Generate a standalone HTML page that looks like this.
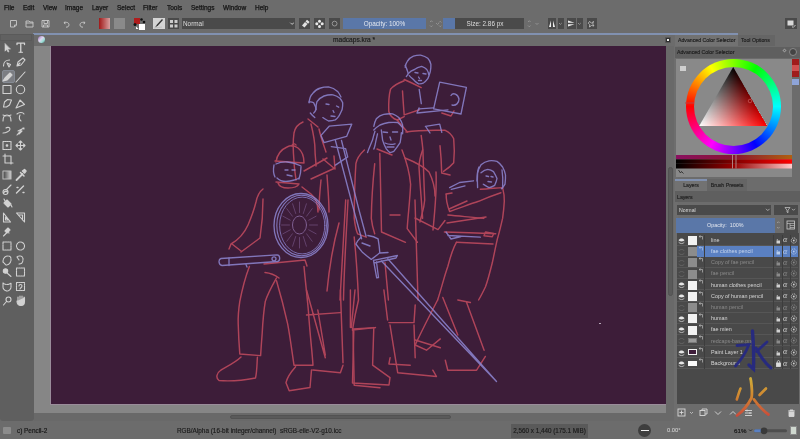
<!DOCTYPE html>
<html><head><meta charset="utf-8">
<style>
*{margin:0;padding:0;box-sizing:border-box}
html,body{width:800px;height:439px;overflow:hidden;background:#6c6c6c;font-family:"Liberation Sans",sans-serif;color:#1e1e1e}
.a{position:absolute}
body>div,body>svg{will-change:transform}
.menu{font-size:6.5px;top:4.2px;color:#151515;-webkit-text-stroke:0.25px #151515}
.tb{position:absolute;top:18px;height:11px}
</style></head><body>
<!-- menu -->
<div class="a menu" style="left:4px">File</div>
<div class="a menu" style="left:23px">Edit</div>
<div class="a menu" style="left:42.5px">View</div>
<div class="a menu" style="left:65px">Image</div>
<div class="a menu" style="left:92px">Layer</div>
<div class="a menu" style="left:117px">Select</div>
<div class="a menu" style="left:143px">Filter</div>
<div class="a menu" style="left:167px">Tools</div>
<div class="a menu" style="left:190.5px">Settings</div>
<div class="a menu" style="left:222.5px">Window</div>
<div class="a menu" style="left:255px">Help</div>

<!-- toolbar -->
<div class="tb" style="left:99px;width:11px;background:linear-gradient(90deg,#a01818,#d8a0a0)"></div>
<div class="tb" style="left:114px;width:11px;background:#8a8a8a"></div>
<div class="tb" style="left:133.5px;width:5.5px;height:5.5px;background:#b01c1c"></div>
<div class="tb" style="left:139px;top:23.5px;width:6px;height:5.5px;background:#fff"></div>
<div class="tb" style="left:152.5px;width:11.5px;background:#d4d4d4"></div>
<div class="tb" style="left:168px;width:11px;background:#4a4a4a"></div>
<div class="tb" style="left:182px;width:113px;background:#4a4a4a;color:#ddd;font-size:6.4px;line-height:11px;padding-left:1px">Normal</div>
<div class="tb" style="left:299px;width:11px;background:#4a4a4a"></div>
<div class="tb" style="left:314px;width:11px;background:#4a4a4a"></div>
<div class="tb" style="left:329px;width:11px;background:#4a4a4a"></div>
<div class="tb" style="left:343px;width:83px;background:#5a77a8;color:#e4e8f0;font-size:6.4px;line-height:11px;text-align:center">Opacity: 100%</div>
<div class="tb" style="left:443px;width:81px;background:#4a4a4a;color:#ddd;font-size:6.4px;line-height:11px;text-align:center"><div class="a" style="left:0;top:0;width:12px;height:11px;background:#5a77a8"></div><span style="position:relative;left:1.5px">Size: 2.86 px</span></div>
<div class="tb" style="left:548px;width:8px;background:#4a4a4a"></div>
<div class="tb" style="left:558px;width:5.5px;background:#4a4a4a"></div>
<div class="tb" style="left:567px;width:8.5px;background:#4a4a4a"></div>
<div class="tb" style="left:577px;width:5.5px;background:#4a4a4a"></div>
<div class="tb" style="left:587px;width:10px;background:#4a4a4a"></div>
<div class="tb" style="left:785px;width:11.5px;background:#4a4a4a"></div>

<!-- blue line -->
<div class="a" style="left:33px;top:33px;width:705px;height:2px;background:#8191b0"></div>

<!-- toolbox -->
<div class="a" style="left:0;top:34px;width:33.7px;height:386.5px;background:#5f5f5f;border-radius:0 0 3px 3px"></div><div class="a" style="left:0;top:34px;width:31.8px;height:7px;border:1px solid #5a5a5a;background:#616161"></div>


<!-- toolbar icons -->
<svg class="a" style="left:0;top:0" width="100" height="34" fill="none" stroke="#c9c9c9" stroke-width="0.9">
<path d="M10.5 20.5h6v4.5l-2 2h-4z M14.5 27v-2h2"/>
<path d="M26 21h3l1 1h3v5h-7z M26 23h7"/>
<path d="M42 20.5h7v6.5h-7z M44 20.5v3h3.5v-3 M43.5 27v-2h4v2"/>
<path d="M65 21.5l-1 1.5 1.5 0.8 M64.2 23c1.5-1.2 4.8-0.8 4.8 1.8 0 2-1.6 2.5-3 2.3"/>
<path d="M84 21.5l1 1.5-1.5 0.8 M84.8 23c-1.5-1.2-4.8-0.8-4.8 1.8 0 2 1.6 2.5 3 2.3"/>
</svg>
<!-- toolbox icons -->
<div class="a" style="left:1.5px;top:70px;width:12.5px;height:13px;background:#7b7d82;border-radius:2px;border:1px solid #858a93"></div>
<svg class="a" style="left:0;top:0" width="34" height="310" fill="none" stroke="#d2d2d2" stroke-width="1.1" stroke-linecap="round" stroke-linejoin="round">
<path d="M5 43.8v7.4l1.7-1.7 1.3 2.6 1-.5-1.3-2.5h2.5z" fill="#d2d2d2" stroke-width="0.6"/>
<path d="M17 43.2h7.5 M17 43.2v1.4 M24.5 43.2v1.4 M20.75 43.2v9" stroke-width="1.3"/><path d="M19 52.3h3.5"/>
<path d="M3.5 66c0-4 3-6 6-6 M7 63l3.5 1.5-1.5 2.5z" />
<path d="M17 66l1-4 5-4 2 2-4 5z M17 66l3-3"/>
<path d="M3 81l2-3 5-5 2 2-5 5z" fill="#d2d2d2"/>
<path d="M16 82l9-10"/>
<rect x="3" y="85.5" width="8" height="8"/>
<circle cx="20.5" cy="89.5" r="4.2"/>
<path d="M3.5 107l1-5 3-2.5 4 0.5-2 5-3 2z"/>
<path d="M16 108l4-8 4.5 4.5z"/>
<path d="M3 121c0-4 2-6 4-6s4 2 4 6 M3 115l3 1 M11 115l-3 1"/>
<path d="M17 114c2-2 6-2 7 0 M20 115c-1 2-1 5 1 6"/>
<path d="M3 133c3 0 7-2 7-4s-3-2-4-1"/>
<path d="M17 135l5-6 M18 131l4-2 2-1 M19 134l3-3 M23 128l1 1"/>
<rect x="3" y="141.5" width="8" height="8" stroke-dasharray="1.2 0.8"/>
<circle cx="7" cy="145.5" r="0.8" fill="#d2d2d2"/>
<path d="M20.5 141v9 M16 145.5h9 M19 142.5l1.5-1.5 1.5 1.5 M19 148.5l1.5 1.5 1.5-1.5 M17.5 144l-1.5 1.5 1.5 1.5 M23.5 144l1.5 1.5-1.5 1.5"/>
<path d="M5 154v9h8 M3 156h8v8"/>
<rect x="3" y="171" width="8" height="8" fill="url(#gr)" stroke="#bbb"/>
<path d="M16.5 180l6-6" stroke-width="1.8"/><path d="M20.5 172.5l3.5 3.5 M22.5 171l2-1.5 1.5 1.5-1.5 2z" stroke-width="1.5" fill="#d2d2d2"/>
<path d="M3.5 193c1-2 3-2 4-1 M6 190l5-5" />
<circle cx="5.5" cy="192" r="2.5"/>
<path d="M16.5 193l7-7 M17 187.5h1 M23 192.5h1" stroke-width="1.4"/>
<path d="M4 203l3-3 4 4-3 3z M5 201l-1-2 M11 205l1 2" fill="#d2d2d2"/>
<path d="M3.5 222v-9l7 9z M5.5 220v-3l3 3z"/>
<path d="M24.5 222v-9l-8 0z M22.5 220v-5h-4"/>
<path d="M3.5 236l3-3 M6 230l3 3 M5 231l3-3 2 2-3 3z" fill="#d2d2d2"/>
<g stroke-dasharray="1.4 0.9">
<rect x="3" y="242" width="8" height="8"/>
<circle cx="20.5" cy="246" r="4"/>
<path d="M3 262c0-4 2-6 5-6s3 2 3 4-2 5-5 5z"/>
<path d="M17 257c2-2 6-1 6 2s-1 5-4 5 M17 257l2 3"/>

<rect x="16.5" y="268" width="8" height="8"/>
<path d="M3 283v4c0 2 2 4 4 4s4-2 4-4v-4c-2 2-6 2-8 0z"/>
<rect x="16.5" y="282.5" width="8" height="8"/>
</g>
<circle cx="5.5" cy="271" r="2.2" fill="#d2d2d2"/><path d="M6.5 272.5l4.5 4" />
<path d="M19 286c0-2 3-2 3 0s-2 2-2 3" />
<circle cx="8.5" cy="299.5" r="2.5"/>
<path d="M3.5 305l3-3.5"/>
<path d="M17 301c0 3 2 4.5 4 4.5s3.5-1.5 3.5-4v-4 M18 301v-4 M20 300v-4 M22 300v-4 M24 300v-3" fill="#d2d2d2"/>
<defs><linearGradient id="gr"><stop offset="0" stop-color="#404040"/><stop offset="1" stop-color="#d0d0d0"/></linearGradient></defs>
</svg>


<!-- toolbar button icons -->
<svg class="a" style="left:0;top:0" width="800" height="34">
<g fill="#e8e8e8">
<path d="M302 25.5l3-3.5 2.5 2-3 3.5z M305.5 21.5l1.5-1.8 2.6 2.2-1.5 1.8z" fill="#e0e0e0"/>
<circle cx="319.5" cy="21.2" r="1.5"/><circle cx="319.5" cy="26.5" r="1.5"/><circle cx="316.8" cy="23.8" r="1.5"/><circle cx="322.2" cy="23.8" r="1.5"/>
</g>
<circle cx="334.6" cy="23.6" r="2.4" fill="none" stroke="#a8a8a8" stroke-width="0.8"/>
<path d="M439 22.5l1.2-1.2 1.2 1.2 M439 25.5l1.2 1.2 1.2-1.2 M430 22l1.3-1.3 1.3 1.3 M430 25.5l1.3 1.3 1.3-1.3" stroke="#a0a0a0" stroke-width="0.7" fill="none"/>
<path d="M436 23l1.5 1.5 1.5-1.5" stroke="#a0a0a0" stroke-width="0.7" fill="none" transform="translate(0,0)"/>
<path d="M528 22l1.3-1.3 1.3 1.3 M528 25.5l1.3 1.3 1.3-1.3 M535.5 23l1.5 1.5 1.5-1.5" stroke="#a0a0a0" stroke-width="0.7" fill="none"/>
<path d="M549 27l2-6.5v6.5z M555 27l-2-6.5v6.5z" fill="#eee"/>
<path d="M559 23l1.4 1.4 1.4-1.4 M578 23l1.4 1.4 1.4-1.4" stroke="#aaa" stroke-width="0.7" fill="none"/>
<path d="M568 20.5l6.5 2.3h-6.5z M568 26.5l6.5-2.3h-6.5z" fill="#eee"/>
<path d="M589.5 21.5l2 1.5 2-1.5 -0.8 2.5 1.3 2 -2.5-0.5-2 1.5 0.3-2.3-1.5-1.5z" fill="none" stroke="#ccc" stroke-width="0.8"/>
<rect x="787.5" y="20.5" width="6" height="5" fill="#d8d8d8"/>
<path d="M792 26.5l1.2 1 2.3-2.5" stroke="#ddd" stroke-width="0.8" fill="none"/>
<path d="M291 23l1.5 1.5 1.5-1.5" stroke="#aaa" stroke-width="0.7" fill="none"/>
</g>
</svg>
<!-- MDI tab icons -->
<div class="a" style="left:37.5px;top:35.8px;width:7px;height:7px;border-radius:50%;background:linear-gradient(135deg,#9a70b8,#e0d8f0 45%,#a0e0d8 70%,#4a8a88)"></div>
<div class="a" style="left:664.5px;top:37px;width:6px;height:6px;border-radius:1px;background:#2e2e2e;border:1px solid #555"><div style="margin:1px;width:2px;height:2px;background:#eee"></div></div>

<!-- MDI -->
<div class="a" style="left:34px;top:46px;width:632px;height:367px;background:#868686"></div>
<div class="a" style="left:50px;top:46px;width:616px;height:359px;background:#9a8c9a"></div><div class="a" style="left:51px;top:46px;width:614.5px;height:358px;background:#3d1d39"></div>
<svg class="a" style="left:0;top:0;filter:blur(0.3px)" width="800" height="439" fill="none" stroke-linecap="round" stroke-linejoin="round">
<g stroke="#c44c60" stroke-width="1.45" opacity="0.85">
<!-- fig1 seated top -->
<path d="M404.2 79.5C410 82 416 85 421.2 87.6"/>
<path d="M404.2 80.7C398 83 393 86 390.5 89.3C388.5 97 388.5 104 388.8 111.5C390 116 394 119 397.3 120L404.2 116.6"/>
<path d="M402.5 91C403 99 403.5 107 404.2 114.9L419.5 109.8"/>
<path d="M397.3 120C400 124 404 128 407.6 132"/>
<path d="M405.9 132C415 130.5 430 130 445.2 130.3C449 132 452 135 453.7 138.8C454.5 147 454.5 155 453.7 162.7C451 166 447 169 443.5 171.3"/>
<path d="M421.2 135.4C422 142 423 148 423 152.5C423.5 168 424 185 424.7 200C424 210 421 216 420 222"/>
<path d="M440 145.7C441 155 441.5 165 441.7 173L450 175"/>
<path d="M441.8 113L451 116L454 110.9"/>
<!-- fig2 hammer -->
<path d="M308 119L318 127"/>
<path d="M303 122C298 124 295 128 294 133C293 140 293 150 294 161C294 166 295 172 296 180"/>
<path d="M311 124C313 132 315 140 315 150C315 156 316 160 316 166"/>
<path d="M304 171L327 158M311 179L335 168M323 159L335 169L334 156"/>
<path d="M319 129C321 138 324 146 326 152"/>
<path d="M327 175C328 190 329 200 329 212M321 180C320 190 319 200 319 210"/>
<!-- fig3 hat -->
<path d="M276 162C277 155 280 150 287 147C291 145 295 146 298 148C302 151 304 156 304 163M275 161L304 163"/>
<path d="M292 146C292 144 295 143 296 145"/>
<path d="M276 182L299 184M278 183C279 186 282 188 288 188C294 188 298 186 299 184"/>
<path d="M263 189C259 192 257 197 256 202C254 210 251 218 248 225C244 234 238 240 231 244L229 249"/>
<path d="M232 244L241 251M241 252L260 238C262 225 263 212 263 199"/>
<path d="M302 187L311 194C316 198 318 204 318 212"/>
<path d="M264 264L305 260L307 266"/>
<path d="M265 272.5C270 273 275 275 279 278"/>
<path d="M249.4 266.4C245 278 242 290 239.8 301.4C238.5 310 238 318 238.2 323.7C238.5 334 239 344 239.8 354L260.6 355.6M276.5 278C272 286 268 293 265.3 301.4C263.5 312 262.8 322 262.2 333.3C261.5 342 261 349 260.6 355.6"/>
<path d="M241 357C236 362 228 366 221 370C216.5 373 215.5 378 219 380.5C230 381.5 245 380 255.5 378C257 372 257 363 257.4 357.2"/>
<path d="M276.5 280.7C281 296 285 312 287.6 323.7C290 336 292 352 294 365.2L313 365.2C312 350 310 335 308.4 311C307 295 305.5 283 304 266.4"/>
<path d="M295.6 366.8C291 372 287 378 286 382.7L289.2 390.7L310 387.5L311.5 370"/>

<path d="M339 223C333 245 329 270 327 291M348 200C346 240 344 270 343.5 300"/>
<!-- fig4 center -->
<path d="M364.4 150C359 155 356.5 160 355.9 163.7C354.8 180 354.3 200 354.2 218.4C355 225 356 230 357.6 233.8L366.2 237.2"/>
<path d="M374.7 163.7C372.5 185 371.5 205 371.3 218.4C372 225 373.5 230 374.7 233.8"/>
<path d="M377 149L392 155"/>
<path d="M379.8 153.4C380.5 180 381 210 381.5 232L405.5 242.3M390 215L400 215"/>
<path d="M402 150C406 160 409.5 172 410.6 184.2C410 200 408 215 407.2 228.6L417.4 242.3"/>
<path d="M422.6 150C420.5 156 419 162 419 167C420 185 421.5 200 422.6 218.4"/>
<path d="M405 158C415 162 424 167 429 172C433 180 435 190 435 196"/>
<path d="M354.2 237C356 255 357.5 275 358.5 300C356 310 354 320 352.5 330M385 262.8L388.4 300M415 200L418 300"/>
<path d="M345.7 200L340 300M436 172C437 190 435 210 433 230"/>
<path d="M415 218L438 229.6L445 220.5M449 209L467 201M447 223L486 217"/>
<path d="M352.5 330L375 327.6M353.8 330L352.5 383L389 385L390 377.7L372.6 365.2L373.8 327.6M355 290L351.3 327.6M383.9 290L387.6 320"/>
<path d="M306.5 315L340.4 312.6M306.5 290L325.3 357.7M317.8 310L325.3 355M340.4 290L343 362.7M312.8 370L340.4 372.7L343 365.2"/>
<path d="M353 328.9L375.5 327.6M353 329L354.2 385.3L380 387.8M350.4 290L350.4 327.6"/>
<path d="M388.9 322.6L414 322.6M390 325L397.7 372.7L436.5 376.5L432.8 370.2M414 325L415.2 357.7M415.2 305L414 322.6"/>
<!-- fig5 right -->
<path d="M480.3 189.3C488 189 496 188 502.6 187.6C504 193 504.5 197 504.3 201.3C504 207 503.5 212 502.6 218.4C501 225 499.5 232 497.4 238.9C495.5 247 494 255 492.3 262.8C490 272 488 280 485.5 286.8C483 292 481 296 478.6 300"/>
<path d="M446.2 194.4C446 200 447.5 206 449.6 211.5C460 208 470 204 478.6 201.3C486 198 494 195 500.9 192.7"/>
<path d="M446 194L452 193"/>
<path d="M447.9 215C460 216 472 217.5 483.8 218.4"/>
<path d="M444.4 232C462 232.5 478 233.2 495.7 233.8M456.4 242.3C470 243 482 243.5 493 244"/>
<path d="M485.5 232L493.7 233.5L492.3 236.7L484 235.8Z"/>
<path d="M456.4 242.3C452 250 450 258 447.9 266.2C444 277 441 290 437.6 300"/>
<path d="M442.8 297.5L457.8 335M466.6 302.5L484.1 350.2M445.3 360.2L447.8 370.2L476.6 370.2L485.4 356.4M457.8 300L470.4 302.5M415.2 340L440.3 347.7M390.1 357.7L388.9 364L410.2 365.2"/>
<path d="M437.6 300C430 315 422 330 415.2 345L426.5 350.2L440.3 338.9"/>
</g>
<g stroke="#8e86d2" stroke-width="1.35" opacity="0.85">
<!-- fig1 head -->
<path d="M405.2 67.4C405.5 65 406 63 407.3 61.3C409 58.5 411 57 413.4 56.1C416 55.3 418 55 420.6 55.1C423.5 55.8 426 56.8 427.8 58.2C429.5 60 430.4 62 430.9 64.3C431 67 430.8 69 430.3 71.5C429.6 74 428.8 76.5 427.8 78.7C426.5 80.5 425 82 423.7 82.8C422.4 83.4 421 83.7 419.6 83.8"/>
<path d="M408.3 73.6C410 71.5 412 70.3 414.5 69.5C416.5 68 419 67 421.6 66.4C423.5 67 425.5 68 426.8 69.5C427.8 71 428.5 72.8 428.8 74.6"/>
<path d="M405.2 65.4C406.5 68 407.5 71 408.3 73.6C407.8 74.8 407 75.8 406.3 76.6M409.3 75.6C411 77.5 412.8 79 414.5 80.7C415.8 82 417.2 83 418.6 83.8"/>
<path d="M415 72.5L418 73M423 73.5L426 74M418.5 77L419.5 78.5M418.5 80.5L421.5 80.5"/>
<path d="M419.2 89.4L421.3 103.7"/>
<path d="M439.7 82.2L466.4 87.3L461 114L433.6 108.8Z"/>
<path d="M419.2 108.8L433.6 107.8M417.2 113L448 109.9M417 113L419 108"/>
<path d="M451 95.5C453 92 458 94 459 99C459 103 456 106 452 105"/>
<path d="M425.4 126.3L439.7 124.2L441.8 132.4M426 127L430 133"/>
<!-- fig2 head -->
<path d="M309.1 102.8C309.5 98 311 95 312.5 93.7C315 90.5 317.5 88.8 320.5 88C323 87 326 86.8 328.5 86.8C332 87.5 335 89 337.6 91.4C339 93 340 95 341 97"/>
<path d="M316 109.6C316 106 316.3 103.5 317 101.6C319 99 321.5 97 324 96C327 95 330 94.6 333 94.8C336 95.5 338 96.5 339.9 98.2C341 99.5 342 101 342.7 102.8C342.8 105 342.6 107.5 342.1 109.6C341 112 340 114.5 338.7 116.4C337.5 118 336.5 119 335.3 119.9C333 120.8 330.5 121 328.5 121C326.5 120 324.5 119 322.8 117.6"/>
<path d="M309 102C311 101.5 312.5 102 313.7 102.8C315 105 315.8 107 316 109.6C315.5 111 314.8 112.2 313.7 113M310.3 113C311.5 114.5 313 116 314.8 117.6"/>
<path d="M326 104L329 104.5M336.5 106L338.7 107.2M333 110.5L334 112.5M331 116L335 116.5"/>
<path d="M321 135.4L329.2 126.2L351.8 124.1L346.6 136.4L324 142.6Z"/>
<path d="M335.4 140.5L353.8 210L361.6 238.7M341.5 140.5L359 210L366 236"/>
<path d="M331.3 146.7L345.6 148.7L347.7 156.9L335.4 165.1"/>
<!-- fig3 face -->
<path d="M274 165C273 170 274 175 275 177M301 167C301 172 300 176 299 179M277 178C280 181 285 182 290 181C295 180 298 179 299 178"/>
<path d="M276 164C282 161 292 161 301 166"/>
<path d="M285 170L288 170M292 170L295 170M287 175L292 176"/>
<ellipse cx="301" cy="225.5" rx="27" ry="32"/>
<ellipse cx="301.6" cy="225.5" rx="24.8" ry="30.2" stroke-width="1.1"/><ellipse cx="302.2" cy="225.5" rx="22.6" ry="28.4" stroke-width="0.9"/>
<ellipse cx="299.5" cy="225" rx="7" ry="9" stroke="#8a6aa0" stroke-width="1"/>
<path stroke-width="0.7" stroke="#7e5c90" d="M309.5 225.0L317.5 225.0 M308.7 229.8L316.1 233.8 M306.6 233.8L312.2 241.3 M303.3 236.5L306.4 246.2 M299.5 237.5L299.5 248.0 M295.7 236.5L292.6 246.2 M292.4 233.8L286.8 241.3 M290.3 229.8L282.9 233.8 M289.5 225.0L281.5 225.0 M290.3 220.2L282.9 216.2 M292.4 216.2L286.8 208.7 M295.7 213.5L292.6 203.8 M299.5 212.5L299.5 202.0 M303.3 213.5L306.4 203.8 M306.6 216.2L312.2 208.7 M308.7 220.2L316.1 216.2"/>
<path d="M221 258.5L277 254.8C280.5 255 280.5 261 277.5 261.5L222 265.5C218.5 265 218 259.5 221 258.5Z"/><path d="M229 258L229 265.5M246 264.5L247 267"/>
<circle cx="274" cy="258.8" r="2"/>
<!-- fig4 head -->
<path d="M373.8 126.3C374.3 123.5 375 121 376.3 118.8C378.5 116.5 381 115 383.8 114.4C386.5 113.8 389.5 113.6 392.6 113.8C395 114.8 397 116 398.8 117.5C400.5 119.8 401.8 122.3 402.6 125C402.8 128 402.8 131 402.6 133.8"/>
<path d="M373.8 130C375.8 128 378 126.2 380 125C383 123.8 386 123 388.8 122.5C391.8 122.3 394.8 122.3 397.6 122.5C399.5 124 401.2 125.8 402.6 127.6"/>
<path d="M381.3 130C381.8 133.5 382.2 137 382.6 140.1C383.5 143.2 384.8 146.2 386.3 148.9C387.5 150.5 388.8 151.8 390 152.6C391.2 152.4 392.5 152 393.8 151.4C396 148.6 398.2 145.6 400.1 142.6C400.8 139.3 401.2 136 401.4 132.6"/>
<path d="M375 131.3C374 134.3 373.2 137.2 372.5 140.1C371.3 143 370 146 368.8 148.9L367.5 152.6M377.5 133.8C376.5 138 375.6 142 375 145.5C374.5 147 374.2 148.5 373.8 149"/>
<path d="M383 132L387.5 132.5M392.5 132L397.6 132M390 137L391 140M385 143C388 144.5 391 144.8 395 143.8M387 147L394 147"/>
<path d="M361 237.2C358.5 239.5 356.8 241.8 355.9 244C358 247 360.5 250 362.7 252.6C365.5 255 368.5 257.5 371.3 259.4C374.5 257 377.5 255 379.8 252.6C379.5 248 378.8 243 378.1 238.9C375 237 371.5 236 367.9 235.5M362 243L370 246M380 253L388 252.5"/>
<path d="M373.5 260.3L397.4 255.5L396 258L374 263M373.5 260.3L376.7 277.8L378.5 277.5L376.5 262"/>
<path d="M381.4 261L496.5 381.5L387.8 258.7"/>
<!-- fig5 head -->
<path d="M477.6 187.6C477.3 182 477.3 177 477.6 172.8C478.3 169.5 479.5 167 481 164.8C483.5 162.5 486 161.3 489 160.8C492 160.5 494.5 160.7 497 161.4C499.5 163 501.2 165 502.6 167C504 169.5 505 172 505.5 175C505.6 178 505.4 181 505 184.2C504 186 503 187.5 501.5 188.7"/>
<path d="M481 172.8C483.5 170.5 485.8 169.5 487.8 169.4C490.5 169.8 492.3 170.8 493.5 171.6C495.5 175 496.6 177.5 497 178.5C496.6 181 495.5 183.5 494.7 185.3C492.5 186.5 490 187.5 489 187.6C486.5 186.5 484.5 185 483.3 184.2"/>
<path d="M486 176L488.5 176.5M491 176.5L493 177M488 181.5L491.5 182"/>
<path d="M449.6 187.6L459.6 182.5L473.5 180.8M451.3 189.3L465 185.9"/>
<path d="M447.9 235.5L480.3 237.2M446 232L451 239L461 236.5"/>
<path d="M477 181C477 176 477.5 170 479 167M502 170C503 176 503 182 502.6 188"/>
</g>
</svg>

<div class="a" style="left:599px;top:323px;width:1.5px;height:1px;background:#b8a8b8"></div>
<div class="a" style="left:332.5px;top:35.8px;font-size:6.6px;color:#1a1a1a;-webkit-text-stroke:0.15px #1a1a1a">madcaps.kra *</div>
<div class="a" style="left:666px;top:46px;width:8px;height:374.5px;background:#696969"></div><div class="a" style="left:668px;top:167px;width:4.5px;height:129px;background:#5a5a5a;border:0.6px solid #525252;border-radius:3px"></div>
<div class="a" style="left:34px;top:412.5px;width:632px;height:8px;background:#696969"></div><div class="a" style="left:229.5px;top:415px;width:221px;height:4px;background:#5a5a5a;border:0.6px solid #525252;border-radius:3px"></div>

<!-- dock -->
<div class="a" style="left:674px;top:46px;width:4px;height:374px;background:#6e6e6e"></div>
<div class="a" style="left:675px;top:35px;width:63px;height:11px;background:#727272;font-size:5.2px;line-height:11px;padding-left:3px;-webkit-text-stroke:0.15px #1e1e1e">Advanced Color Selector</div>
<div class="a" style="left:738px;top:35px;width:37px;height:11px;background:#656565;font-size:5.2px;line-height:11px;padding-left:3px;-webkit-text-stroke:0.15px #1e1e1e">Tool Options</div>
<div class="a" style="left:675px;top:46.5px;width:125px;height:11px;background:#5f5f5f;font-size:5.2px;line-height:11px;padding-left:2px;-webkit-text-stroke:0.15px #1e1e1e">Advanced Color Selector</div>
<div class="a" style="left:676px;top:58.5px;width:116px;height:118px;background:#898989"></div>


<!-- color selector -->
<div class="a" style="left:685.9px;top:58.7px;width:95px;height:95px;border-radius:50%;background:conic-gradient(from -90deg,#f00,#ff0,#0f0,#0ff,#00f,#f0f,#f00)"></div>
<div class="a" style="left:693.9px;top:66.7px;width:79px;height:79px;border-radius:50%;background:#898989"></div>
<div class="a" style="left:699.2px;top:67px;width:68.4px;height:59.2px;clip-path:polygon(34.2px 0,0 59.2px,68.4px 59.2px);background:linear-gradient(#000,rgba(0,0,0,0)),conic-gradient(from 150deg at 34.2px 0px,#f00 0deg,#fff 60deg,#fff 360deg)"></div>
<svg class="a" style="left:676px;top:58px" width="116" height="120">
<defs>
<linearGradient id="tw" x1="0" y1="0" x2="1" y2="0"><stop offset="0" stop-color="#fff"/><stop offset="1" stop-color="#f00"/></linearGradient>
<linearGradient id="tb" gradientUnits="userSpaceOnUse" x1="57.4" y1="9" x2="57.4" y2="68"><stop offset="0" stop-color="#000"/><stop offset="1" stop-color="#000" stop-opacity="0"/></linearGradient>
<linearGradient id="s1"><stop offset="0" stop-color="#8a1060"/><stop offset="0.5" stop-color="#8a1530"/><stop offset="1" stop-color="#b06010"/></linearGradient>
<linearGradient id="s2"><stop offset="0" stop-color="#000"/><stop offset="1" stop-color="#f00"/></linearGradient>
<linearGradient id="s3"><stop offset="0" stop-color="#000"/><stop offset="0.5" stop-color="#900"/><stop offset="1" stop-color="#fcc"/></linearGradient>
</defs>

<circle cx="74" cy="43" r="1.8" fill="none" stroke="#c86060" stroke-width="0.7"/>
<rect x="9" y="44.5" width="9" height="1" fill="#c04040"/>
<rect x="0" y="97" width="116" height="4.3" fill="url(#s1)"/>
<rect x="0" y="101.3" width="116" height="4.5" fill="url(#s2)"/>
<rect x="0" y="105.8" width="116" height="4.7" fill="url(#s3)"/>
<rect x="56" y="97" width="1" height="13.5" fill="#b08080"/>
<rect x="59.5" y="97" width="1" height="13.5" fill="#b08080"/>
<rect x="4" y="8" width="6" height="5" fill="#cfcfcf"/>
<path d="M2.5 112l2 3 1-1.5 2 2" stroke="#222" fill="none" stroke-width="0.8"/>
</svg>
<div class="a" style="left:792px;top:59px;width:7px;height:6px;background:#a01c1c"></div>
<div class="a" style="left:792px;top:65px;width:7px;height:6.3px;background:#d05050"></div>
<div class="a" style="left:792px;top:71.3px;width:7px;height:6.4px;background:#a01c1c"></div>
<div class="a" style="left:792px;top:79px;width:7px;height:6px;background:#8ea4d8"></div>
<div class="a" style="left:783px;top:49px;width:3px;height:3px;border:0.7px solid #999;transform:rotate(45deg)"></div>
<div class="a" style="left:789px;top:47.5px;width:8px;height:8px;border-radius:50%;background:#444;border:1px solid #8a8a8a"></div>

<!-- layers -->
<div class="a" style="left:675px;top:178.5px;width:32px;height:12px;background:#727272;font-size:5.2px;line-height:9px;text-align:center;border-top:2px solid #8191b0;-webkit-text-stroke:0.15px #1e1e1e">Layers</div>
<div class="a" style="left:707px;top:178.5px;width:40px;height:12px;background:#656565;font-size:5.2px;line-height:12px;text-align:center;-webkit-text-stroke:0.15px #1e1e1e">Brush Presets</div>
<div class="a" style="left:675px;top:191px;width:125px;height:11px;background:#5f5f5f;font-size:5.2px;line-height:13px;padding-left:2px;-webkit-text-stroke:0.15px #1e1e1e">Layers</div>
<div class="a" style="left:677px;top:205px;width:94px;height:10px;background:#4a4a4a;color:#ddd;font-size:5.2px;line-height:10px;padding-left:2px">Normal</div>
<div class="a" style="left:774px;top:205px;width:23.5px;height:10px;background:#4a4a4a"></div>
<div class="a" style="left:676px;top:218px;width:98.5px;height:14.5px;background:#5a77a8;color:#e4e8f0;font-size:5.4px;line-height:14.5px;text-align:center">Opacity:&nbsp; 100%</div>
<div class="a" style="left:784px;top:218px;width:13.5px;height:14.5px;background:#4a4a4a"></div>
<div class="a" style="left:676.5px;top:233px;width:121.5px;height:171px;background:#494949"></div>


<svg class="a" style="left:0;top:0" width="800" height="240">
<circle cx="141.5" cy="19.5" r="1.3" fill="#111"/><circle cx="144" cy="22" r="1.3" fill="#111"/>
<circle cx="135" cy="24.5" r="1.5" fill="#111"/><path d="M136 26.5l2.5 2.5h-2.5z" fill="#fff"/>
<path d="M155 27.5l2-3 5-5.5 1 1-5 5.5z" fill="#333"/>
<path d="M154 28l8-1" stroke="#aaa" stroke-width="0.5"/>
<rect x="170" y="20" width="3" height="3" fill="#ccc"/><rect x="174.5" y="20" width="3" height="3" fill="#ccc"/>
<rect x="170" y="24.5" width="3" height="3" fill="#ccc"/><rect x="174.5" y="24.5" width="3" height="3" fill="#ccc"/>
<path d="M290 22.5l1.8 1.8 1.8-1.8" stroke="#bbb" stroke-width="0.7" fill="none"/>
<path d="M766 208.8l1.8 1.8 1.8-1.8" stroke="#ccc" stroke-width="0.7" fill="none"/>
<path d="M785 207.5h5l-2 2.7v2.5l-1 -0.6v-1.9z" stroke="#ccc" stroke-width="0.7" fill="none"/>
<path d="M792 208.8l1.5 1.5 1.5-1.5" stroke="#ccc" stroke-width="0.7" fill="none"/>
<path d="M777 223l1.3-1.3 1.3 1.3 M777 227l1.3 1.3 1.3-1.3" stroke="#aaa" stroke-width="0.7" fill="none"/>
<rect x="787" y="221" width="7.5" height="8" fill="none" stroke="#ccc" stroke-width="0.8"/>
<path d="M787 223.5h7.5 M790 223.5v5.5 M790 225.5h4 M790 227.5h4" stroke="#ccc" stroke-width="0.6"/>
</svg>

<!-- layer rows -->
<div class="a" style="left:677px;top:234.5px;width:121px;height:11.2px;border-bottom:1px solid #565656"></div>
<svg class="a" style="left:677px;top:234.5px" width="9" height="11"><path d="M1.5 5.2c1.5-2.2 4.5-2.2 6 0c-1.5 1.6-4.5 1.6-6 0z" fill="#e6e6e6"/><path d="M1.6 7.2c1.6 1.8 4.4 1.8 5.8 0" stroke="#cfcfcf" stroke-width="0.8" fill="none"/></svg>
<div class="a" style="left:687.5px;top:236.0px;width:9px;height:8.5px;background:#f2f2f2"></div>
<svg class="a" style="left:697.5px;top:234.5px" width="6" height="6"><path d="M1 1.5h3.5v3 M2.5 0.5l-1.5 1 1.5 1" stroke="#b8b8b8" stroke-width="0.7" fill="none"/></svg>
<div class="a" style="left:703.5px;top:234.5px;width:0.6px;height:11.2px;background:#3d3d3d"></div>
<div class="a" style="left:773.3px;top:234.5px;width:0.6px;height:11.2px;background:#3d3d3d"></div>
<div class="a" style="left:781.5px;top:234.5px;width:0.6px;height:11.2px;background:#3d3d3d"></div>
<div class="a" style="left:789.7px;top:234.5px;width:0.6px;height:11.2px;background:#3d3d3d"></div>
<div class="a" style="left:711px;top:236.7px;font-size:5.4px;color:#d6d6d6;white-space:nowrap">line</div>
<svg class="a" style="left:774px;top:234.5px" width="8" height="11"><rect x="2.5" y="5.5" width="3.5" height="3" fill="#d0d0d0"/><path d="M3.3 5.5v-1.5" stroke="#d0d0d0" stroke-width="0.8"/></svg>
<div class="a" style="left:782.5px;top:235.3px;font-family:'Liberation Serif',serif;font-size:8px;font-style:italic;color:#d0d0d0">α</div>
<svg class="a" style="left:790px;top:234.5px" width="8" height="11"><circle cx="3.8" cy="5.5" r="2.6" fill="none" stroke="#d0d0d0" stroke-width="0.9" stroke-dasharray="1.2 0.8"/><circle cx="3.8" cy="5.5" r="0.9" fill="#d0d0d0"/></svg>
<div class="a" style="left:677px;top:245.7px;width:121px;height:11.2px;border-bottom:1px solid #565656"></div>
<div class="a" style="left:697px;top:245.7px;width:100.5px;height:10.6px;background:#5a80c2"></div>
<svg class="a" style="left:677px;top:245.7px" width="9" height="11"><path d="M1.6 5c1.6-2 4.4-2 5.8 0 M1.6 7.2c1.6 1.8 4.4 1.8 5.8 0" stroke="#6a6a6a" stroke-width="0.8" fill="none"/></svg>
<div class="a" style="left:687.5px;top:247.2px;width:9px;height:8.5px;background:#8c8c8c"></div>
<svg class="a" style="left:697.5px;top:245.7px" width="6" height="6"><path d="M1 1.5h3.5v3 M2.5 0.5l-1.5 1 1.5 1" stroke="#a8c0e8" stroke-width="0.7" fill="none"/></svg>
<div class="a" style="left:703.5px;top:245.7px;width:0.6px;height:11.2px;background:#3d3d3d"></div>
<div class="a" style="left:773.3px;top:245.7px;width:0.6px;height:11.2px;background:#3d3d3d"></div>
<div class="a" style="left:781.5px;top:245.7px;width:0.6px;height:11.2px;background:#3d3d3d"></div>
<div class="a" style="left:789.7px;top:245.7px;width:0.6px;height:11.2px;background:#3d3d3d"></div>
<div class="a" style="left:711px;top:247.9px;font-size:5.4px;color:#c8d6ee;white-space:nowrap">fae clothes pencil</div>
<svg class="a" style="left:774px;top:245.7px" width="8" height="11"><rect x="2.5" y="5.5" width="3.5" height="3" fill="#b8cbea"/><path d="M3.3 5.5v-1.5" stroke="#b8cbea" stroke-width="0.8"/></svg>
<div class="a" style="left:782.5px;top:246.5px;font-family:'Liberation Serif',serif;font-size:8px;font-style:italic;color:#b8cbea">α</div>
<svg class="a" style="left:790px;top:245.7px" width="8" height="11"><circle cx="3.8" cy="5.5" r="2.6" fill="none" stroke="#b8cbea" stroke-width="0.9" stroke-dasharray="1.2 0.8"/><circle cx="3.8" cy="5.5" r="0.9" fill="#b8cbea"/></svg>
<div class="a" style="left:677px;top:256.9px;width:121px;height:11.2px;border-bottom:1px solid #565656"></div>
<svg class="a" style="left:677px;top:256.9px" width="9" height="11"><path d="M1.6 5c1.6-2 4.4-2 5.8 0 M1.6 7.2c1.6 1.8 4.4 1.8 5.8 0" stroke="#6a6a6a" stroke-width="0.8" fill="none"/></svg>
<div class="a" style="left:687.5px;top:258.4px;width:9px;height:8.5px;background:#8c8c8c"></div>
<svg class="a" style="left:697.5px;top:256.9px" width="6" height="6"><path d="M1 1.5h3.5v3 M2.5 0.5l-1.5 1 1.5 1" stroke="#b8b8b8" stroke-width="0.7" fill="none"/></svg>
<div class="a" style="left:703.5px;top:256.9px;width:0.6px;height:11.2px;background:#3d3d3d"></div>
<div class="a" style="left:773.3px;top:256.9px;width:0.6px;height:11.2px;background:#3d3d3d"></div>
<div class="a" style="left:781.5px;top:256.9px;width:0.6px;height:11.2px;background:#3d3d3d"></div>
<div class="a" style="left:789.7px;top:256.9px;width:0.6px;height:11.2px;background:#3d3d3d"></div>
<div class="a" style="left:711px;top:259.1px;font-size:5.4px;color:#8a8a8a;white-space:nowrap">Copy of fae pencil</div>
<svg class="a" style="left:774px;top:256.9px" width="8" height="11"><rect x="2.5" y="5.5" width="3.5" height="3" fill="#8a8a8a"/><path d="M3.3 5.5v-1.5" stroke="#8a8a8a" stroke-width="0.8"/></svg>
<div class="a" style="left:782.5px;top:257.7px;font-family:'Liberation Serif',serif;font-size:8px;font-style:italic;color:#8a8a8a">α</div>
<svg class="a" style="left:790px;top:256.9px" width="8" height="11"><circle cx="3.8" cy="5.5" r="2.6" fill="none" stroke="#8a8a8a" stroke-width="0.9" stroke-dasharray="1.2 0.8"/><circle cx="3.8" cy="5.5" r="0.9" fill="#8a8a8a"/></svg>
<div class="a" style="left:677px;top:268.1px;width:121px;height:11.2px;border-bottom:1px solid #565656"></div>
<svg class="a" style="left:677px;top:268.1px" width="9" height="11"><path d="M1.6 5c1.6-2 4.4-2 5.8 0 M1.6 7.2c1.6 1.8 4.4 1.8 5.8 0" stroke="#6a6a6a" stroke-width="0.8" fill="none"/></svg>
<div class="a" style="left:687.5px;top:269.6px;width:9px;height:8.5px;background:#8c8c8c"></div>
<svg class="a" style="left:697.5px;top:268.1px" width="6" height="6"><path d="M1 1.5h3.5v3 M2.5 0.5l-1.5 1 1.5 1" stroke="#b8b8b8" stroke-width="0.7" fill="none"/></svg>
<div class="a" style="left:703.5px;top:268.1px;width:0.6px;height:11.2px;background:#3d3d3d"></div>
<div class="a" style="left:773.3px;top:268.1px;width:0.6px;height:11.2px;background:#3d3d3d"></div>
<div class="a" style="left:781.5px;top:268.1px;width:0.6px;height:11.2px;background:#3d3d3d"></div>
<div class="a" style="left:789.7px;top:268.1px;width:0.6px;height:11.2px;background:#3d3d3d"></div>
<div class="a" style="left:711px;top:270.3px;font-size:5.4px;color:#8a8a8a;white-space:nowrap">fae pencil</div>
<svg class="a" style="left:774px;top:268.1px" width="8" height="11"><rect x="2.5" y="5.5" width="3.5" height="3" fill="#8a8a8a"/><path d="M3.3 5.5v-1.5" stroke="#8a8a8a" stroke-width="0.8"/></svg>
<div class="a" style="left:782.5px;top:268.9px;font-family:'Liberation Serif',serif;font-size:8px;font-style:italic;color:#8a8a8a">α</div>
<svg class="a" style="left:790px;top:268.1px" width="8" height="11"><circle cx="3.8" cy="5.5" r="2.6" fill="none" stroke="#8a8a8a" stroke-width="0.9" stroke-dasharray="1.2 0.8"/><circle cx="3.8" cy="5.5" r="0.9" fill="#8a8a8a"/></svg>
<div class="a" style="left:677px;top:279.3px;width:121px;height:11.2px;border-bottom:1px solid #565656"></div>
<svg class="a" style="left:677px;top:279.3px" width="9" height="11"><path d="M1.5 5.2c1.5-2.2 4.5-2.2 6 0c-1.5 1.6-4.5 1.6-6 0z" fill="#e6e6e6"/><path d="M1.6 7.2c1.6 1.8 4.4 1.8 5.8 0" stroke="#cfcfcf" stroke-width="0.8" fill="none"/></svg>
<div class="a" style="left:687.5px;top:280.8px;width:9px;height:8.5px;background:#f2f2f2"></div>
<svg class="a" style="left:697.5px;top:279.3px" width="6" height="6"><path d="M1 1.5h3.5v3 M2.5 0.5l-1.5 1 1.5 1" stroke="#b8b8b8" stroke-width="0.7" fill="none"/></svg>
<div class="a" style="left:703.5px;top:279.3px;width:0.6px;height:11.2px;background:#3d3d3d"></div>
<div class="a" style="left:773.3px;top:279.3px;width:0.6px;height:11.2px;background:#3d3d3d"></div>
<div class="a" style="left:781.5px;top:279.3px;width:0.6px;height:11.2px;background:#3d3d3d"></div>
<div class="a" style="left:789.7px;top:279.3px;width:0.6px;height:11.2px;background:#3d3d3d"></div>
<div class="a" style="left:711px;top:281.5px;font-size:5.4px;color:#d6d6d6;white-space:nowrap">human clothes pencil</div>
<svg class="a" style="left:774px;top:279.3px" width="8" height="11"><rect x="2.5" y="5.5" width="3.5" height="3" fill="#d0d0d0"/><path d="M3.3 5.5v-1.5" stroke="#d0d0d0" stroke-width="0.8"/></svg>
<div class="a" style="left:782.5px;top:280.1px;font-family:'Liberation Serif',serif;font-size:8px;font-style:italic;color:#d0d0d0">α</div>
<svg class="a" style="left:790px;top:279.3px" width="8" height="11"><circle cx="3.8" cy="5.5" r="2.6" fill="none" stroke="#d0d0d0" stroke-width="0.9" stroke-dasharray="1.2 0.8"/><circle cx="3.8" cy="5.5" r="0.9" fill="#d0d0d0"/></svg>
<div class="a" style="left:677px;top:290.5px;width:121px;height:11.2px;border-bottom:1px solid #565656"></div>
<svg class="a" style="left:677px;top:290.5px" width="9" height="11"><path d="M1.5 5.2c1.5-2.2 4.5-2.2 6 0c-1.5 1.6-4.5 1.6-6 0z" fill="#e6e6e6"/><path d="M1.6 7.2c1.6 1.8 4.4 1.8 5.8 0" stroke="#cfcfcf" stroke-width="0.8" fill="none"/></svg>
<div class="a" style="left:687.5px;top:292.0px;width:9px;height:8.5px;background:#f2f2f2"></div>
<svg class="a" style="left:697.5px;top:290.5px" width="6" height="6"><path d="M1 1.5h3.5v3 M2.5 0.5l-1.5 1 1.5 1" stroke="#b8b8b8" stroke-width="0.7" fill="none"/></svg>
<div class="a" style="left:703.5px;top:290.5px;width:0.6px;height:11.2px;background:#3d3d3d"></div>
<div class="a" style="left:773.3px;top:290.5px;width:0.6px;height:11.2px;background:#3d3d3d"></div>
<div class="a" style="left:781.5px;top:290.5px;width:0.6px;height:11.2px;background:#3d3d3d"></div>
<div class="a" style="left:789.7px;top:290.5px;width:0.6px;height:11.2px;background:#3d3d3d"></div>
<div class="a" style="left:711px;top:292.7px;font-size:5.4px;color:#d6d6d6;white-space:nowrap">Copy of human pencil</div>
<svg class="a" style="left:774px;top:290.5px" width="8" height="11"><rect x="2.5" y="5.5" width="3.5" height="3" fill="#d0d0d0"/><path d="M3.3 5.5v-1.5" stroke="#d0d0d0" stroke-width="0.8"/></svg>
<div class="a" style="left:782.5px;top:291.3px;font-family:'Liberation Serif',serif;font-size:8px;font-style:italic;color:#d0d0d0">α</div>
<svg class="a" style="left:790px;top:290.5px" width="8" height="11"><circle cx="3.8" cy="5.5" r="2.6" fill="none" stroke="#d0d0d0" stroke-width="0.9" stroke-dasharray="1.2 0.8"/><circle cx="3.8" cy="5.5" r="0.9" fill="#d0d0d0"/></svg>
<div class="a" style="left:677px;top:301.7px;width:121px;height:11.2px;border-bottom:1px solid #565656"></div>
<svg class="a" style="left:677px;top:301.7px" width="9" height="11"><path d="M1.6 5c1.6-2 4.4-2 5.8 0 M1.6 7.2c1.6 1.8 4.4 1.8 5.8 0" stroke="#6a6a6a" stroke-width="0.8" fill="none"/></svg>
<div class="a" style="left:687.5px;top:303.2px;width:9px;height:8.5px;background:#8c8c8c"></div>
<svg class="a" style="left:697.5px;top:301.7px" width="6" height="6"><path d="M1 1.5h3.5v3 M2.5 0.5l-1.5 1 1.5 1" stroke="#b8b8b8" stroke-width="0.7" fill="none"/></svg>
<div class="a" style="left:703.5px;top:301.7px;width:0.6px;height:11.2px;background:#3d3d3d"></div>
<div class="a" style="left:773.3px;top:301.7px;width:0.6px;height:11.2px;background:#3d3d3d"></div>
<div class="a" style="left:781.5px;top:301.7px;width:0.6px;height:11.2px;background:#3d3d3d"></div>
<div class="a" style="left:789.7px;top:301.7px;width:0.6px;height:11.2px;background:#3d3d3d"></div>
<div class="a" style="left:711px;top:303.9px;font-size:5.4px;color:#8a8a8a;white-space:nowrap">human pencil</div>
<svg class="a" style="left:774px;top:301.7px" width="8" height="11"><rect x="2.5" y="5.5" width="3.5" height="3" fill="#8a8a8a"/><path d="M3.3 5.5v-1.5" stroke="#8a8a8a" stroke-width="0.8"/></svg>
<div class="a" style="left:782.5px;top:302.5px;font-family:'Liberation Serif',serif;font-size:8px;font-style:italic;color:#8a8a8a">α</div>
<svg class="a" style="left:790px;top:301.7px" width="8" height="11"><circle cx="3.8" cy="5.5" r="2.6" fill="none" stroke="#8a8a8a" stroke-width="0.9" stroke-dasharray="1.2 0.8"/><circle cx="3.8" cy="5.5" r="0.9" fill="#8a8a8a"/></svg>
<div class="a" style="left:677px;top:312.9px;width:121px;height:11.2px;border-bottom:1px solid #565656"></div>
<svg class="a" style="left:677px;top:312.9px" width="9" height="11"><path d="M1.5 5.2c1.5-2.2 4.5-2.2 6 0c-1.5 1.6-4.5 1.6-6 0z" fill="#e6e6e6"/><path d="M1.6 7.2c1.6 1.8 4.4 1.8 5.8 0" stroke="#cfcfcf" stroke-width="0.8" fill="none"/></svg>
<div class="a" style="left:687.5px;top:314.4px;width:9px;height:8.5px;background:#f2f2f2"></div>
<svg class="a" style="left:697.5px;top:312.9px" width="6" height="6"><path d="M1 1.5h3.5v3 M2.5 0.5l-1.5 1 1.5 1" stroke="#b8b8b8" stroke-width="0.7" fill="none"/></svg>
<div class="a" style="left:703.5px;top:312.9px;width:0.6px;height:11.2px;background:#3d3d3d"></div>
<div class="a" style="left:773.3px;top:312.9px;width:0.6px;height:11.2px;background:#3d3d3d"></div>
<div class="a" style="left:781.5px;top:312.9px;width:0.6px;height:11.2px;background:#3d3d3d"></div>
<div class="a" style="left:789.7px;top:312.9px;width:0.6px;height:11.2px;background:#3d3d3d"></div>
<div class="a" style="left:711px;top:315.1px;font-size:5.4px;color:#d6d6d6;white-space:nowrap">human</div>
<svg class="a" style="left:774px;top:312.9px" width="8" height="11"><rect x="2.5" y="5.5" width="3.5" height="3" fill="#d0d0d0"/><path d="M3.3 5.5v-1.5" stroke="#d0d0d0" stroke-width="0.8"/></svg>
<div class="a" style="left:782.5px;top:313.7px;font-family:'Liberation Serif',serif;font-size:8px;font-style:italic;color:#d0d0d0">α</div>
<svg class="a" style="left:790px;top:312.9px" width="8" height="11"><circle cx="3.8" cy="5.5" r="2.6" fill="none" stroke="#d0d0d0" stroke-width="0.9" stroke-dasharray="1.2 0.8"/><circle cx="3.8" cy="5.5" r="0.9" fill="#d0d0d0"/></svg>
<div class="a" style="left:677px;top:324.1px;width:121px;height:11.2px;border-bottom:1px solid #565656"></div>
<svg class="a" style="left:677px;top:324.1px" width="9" height="11"><path d="M1.5 5.2c1.5-2.2 4.5-2.2 6 0c-1.5 1.6-4.5 1.6-6 0z" fill="#e6e6e6"/><path d="M1.6 7.2c1.6 1.8 4.4 1.8 5.8 0" stroke="#cfcfcf" stroke-width="0.8" fill="none"/></svg>
<div class="a" style="left:687.5px;top:325.6px;width:9px;height:8.5px;background:#f2f2f2"></div>
<svg class="a" style="left:697.5px;top:324.1px" width="6" height="6"><path d="M1 1.5h3.5v3 M2.5 0.5l-1.5 1 1.5 1" stroke="#b8b8b8" stroke-width="0.7" fill="none"/></svg>
<div class="a" style="left:703.5px;top:324.1px;width:0.6px;height:11.2px;background:#3d3d3d"></div>
<div class="a" style="left:773.3px;top:324.1px;width:0.6px;height:11.2px;background:#3d3d3d"></div>
<div class="a" style="left:781.5px;top:324.1px;width:0.6px;height:11.2px;background:#3d3d3d"></div>
<div class="a" style="left:789.7px;top:324.1px;width:0.6px;height:11.2px;background:#3d3d3d"></div>
<div class="a" style="left:711px;top:326.3px;font-size:5.4px;color:#d6d6d6;white-space:nowrap">fae mien</div>
<svg class="a" style="left:774px;top:324.1px" width="8" height="11"><rect x="2.5" y="5.5" width="3.5" height="3" fill="#d0d0d0"/><path d="M3.3 5.5v-1.5" stroke="#d0d0d0" stroke-width="0.8"/></svg>
<div class="a" style="left:782.5px;top:324.9px;font-family:'Liberation Serif',serif;font-size:8px;font-style:italic;color:#d0d0d0">α</div>
<svg class="a" style="left:790px;top:324.1px" width="8" height="11"><circle cx="3.8" cy="5.5" r="2.6" fill="none" stroke="#d0d0d0" stroke-width="0.9" stroke-dasharray="1.2 0.8"/><circle cx="3.8" cy="5.5" r="0.9" fill="#d0d0d0"/></svg>
<div class="a" style="left:677px;top:335.3px;width:121px;height:11.2px;border-bottom:1px solid #565656"></div>
<svg class="a" style="left:677px;top:335.3px" width="9" height="11"><path d="M1.6 5c1.6-2 4.4-2 5.8 0 M1.6 7.2c1.6 1.8 4.4 1.8 5.8 0" stroke="#6a6a6a" stroke-width="0.8" fill="none"/></svg>
<div class="a" style="left:687.5px;top:338.3px;width:9px;height:5px;background:#9a9a9a;border:1px solid #7a7a7a"></div>
<svg class="a" style="left:697.5px;top:335.3px" width="6" height="6"><path d="M1 1.5h3.5v3 M2.5 0.5l-1.5 1 1.5 1" stroke="#b8b8b8" stroke-width="0.7" fill="none"/></svg>
<div class="a" style="left:703.5px;top:335.3px;width:0.6px;height:11.2px;background:#3d3d3d"></div>
<div class="a" style="left:773.3px;top:335.3px;width:0.6px;height:11.2px;background:#3d3d3d"></div>
<div class="a" style="left:781.5px;top:335.3px;width:0.6px;height:11.2px;background:#3d3d3d"></div>
<div class="a" style="left:789.7px;top:335.3px;width:0.6px;height:11.2px;background:#3d3d3d"></div>
<div class="a" style="left:711px;top:337.5px;font-size:5.4px;color:#8a8a8a;white-space:nowrap">redcaps-base.png</div>
<svg class="a" style="left:774px;top:335.3px" width="8" height="11"><rect x="2.5" y="5.5" width="3.5" height="3" fill="#8a8a8a"/><path d="M3.3 5.5v-1.5" stroke="#8a8a8a" stroke-width="0.8"/></svg>
<div class="a" style="left:782.5px;top:336.1px;font-family:'Liberation Serif',serif;font-size:8px;font-style:italic;color:#8a8a8a">α</div>
<svg class="a" style="left:790px;top:335.3px" width="8" height="11"><circle cx="3.8" cy="5.5" r="2.6" fill="none" stroke="#8a8a8a" stroke-width="0.9" stroke-dasharray="1.2 0.8"/><circle cx="3.8" cy="5.5" r="0.9" fill="#8a8a8a"/></svg>
<div class="a" style="left:677px;top:346.5px;width:121px;height:11.2px;border-bottom:1px solid #565656"></div>
<svg class="a" style="left:677px;top:346.5px" width="9" height="11"><path d="M1.5 5.2c1.5-2.2 4.5-2.2 6 0c-1.5 1.6-4.5 1.6-6 0z" fill="#e6e6e6"/><path d="M1.6 7.2c1.6 1.8 4.4 1.8 5.8 0" stroke="#cfcfcf" stroke-width="0.8" fill="none"/></svg>
<div class="a" style="left:687.5px;top:349.0px;width:9px;height:6px;background:#f0f0f0;border:1px solid #f0f0f0"><div style="width:7px;height:4px;background:#3e1e3a"></div></div>
<svg class="a" style="left:697.5px;top:346.5px" width="6" height="6"><path d="M1 1.5h3.5v3 M2.5 0.5l-1.5 1 1.5 1" stroke="#b8b8b8" stroke-width="0.7" fill="none"/></svg>
<div class="a" style="left:703.5px;top:346.5px;width:0.6px;height:11.2px;background:#3d3d3d"></div>
<div class="a" style="left:773.3px;top:346.5px;width:0.6px;height:11.2px;background:#3d3d3d"></div>
<div class="a" style="left:781.5px;top:346.5px;width:0.6px;height:11.2px;background:#3d3d3d"></div>
<div class="a" style="left:789.7px;top:346.5px;width:0.6px;height:11.2px;background:#3d3d3d"></div>
<div class="a" style="left:711px;top:348.7px;font-size:5.4px;color:#d6d6d6;white-space:nowrap">Paint Layer 1</div>
<svg class="a" style="left:774px;top:346.5px" width="8" height="11"><rect x="2.5" y="5.5" width="3.5" height="3" fill="#d0d0d0"/><path d="M3.3 5.5v-1.5" stroke="#d0d0d0" stroke-width="0.8"/></svg>
<div class="a" style="left:782.5px;top:347.3px;font-family:'Liberation Serif',serif;font-size:8px;font-style:italic;color:#d0d0d0">α</div>
<svg class="a" style="left:790px;top:346.5px" width="8" height="11"><circle cx="3.8" cy="5.5" r="2.6" fill="none" stroke="#d0d0d0" stroke-width="0.9" stroke-dasharray="1.2 0.8"/><circle cx="3.8" cy="5.5" r="0.9" fill="#d0d0d0"/></svg>
<div class="a" style="left:677px;top:357.7px;width:121px;height:11.2px;border-bottom:1px solid #565656"></div>
<svg class="a" style="left:677px;top:357.7px" width="9" height="11"><path d="M1.5 5.2c1.5-2.2 4.5-2.2 6 0c-1.5 1.6-4.5 1.6-6 0z" fill="#e6e6e6"/><path d="M1.6 7.2c1.6 1.8 4.4 1.8 5.8 0" stroke="#cfcfcf" stroke-width="0.8" fill="none"/></svg>
<div class="a" style="left:687.5px;top:360.7px;width:9px;height:5px;background:#fafafa"></div>
<svg class="a" style="left:697.5px;top:357.7px" width="6" height="6"><path d="M1 1.5h3.5v3 M2.5 0.5l-1.5 1 1.5 1" stroke="#b8b8b8" stroke-width="0.7" fill="none"/></svg>
<div class="a" style="left:703.5px;top:357.7px;width:0.6px;height:11.2px;background:#3d3d3d"></div>
<div class="a" style="left:773.3px;top:357.7px;width:0.6px;height:11.2px;background:#3d3d3d"></div>
<div class="a" style="left:781.5px;top:357.7px;width:0.6px;height:11.2px;background:#3d3d3d"></div>
<div class="a" style="left:789.7px;top:357.7px;width:0.6px;height:11.2px;background:#3d3d3d"></div>
<div class="a" style="left:711px;top:359.9px;font-size:5.4px;color:#d6d6d6;white-space:nowrap">Background</div>
<svg class="a" style="left:774px;top:357.7px" width="24" height="11" fill="none" stroke="#dcdcdc" stroke-width="0.8"><rect x="2.5" y="5" width="4" height="3.5" fill="#dcdcdc"/><path d="M3.3 5v-1.3c0-1.5 2.4-1.5 2.4 0v1.3"/></svg>
<div class="a" style="left:782.5px;top:358.5px;font-family:'Liberation Serif',serif;font-size:8px;font-style:italic;color:#d0d0d0">α</div>
<svg class="a" style="left:790px;top:357.7px" width="8" height="11"><circle cx="3.8" cy="5.5" r="2.6" fill="none" stroke="#d0d0d0" stroke-width="0.9" stroke-dasharray="1.2 0.8"/><circle cx="3.8" cy="5.5" r="0.9" fill="#d0d0d0"/></svg>
<!-- layer buttons -->
<svg class="a" style="left:676px;top:405px" width="124" height="16" fill="none" stroke="#d8d8d8" stroke-width="0.9">
<rect x="2" y="4" width="7" height="7"/><path d="M5.5 5.5v4 M3.5 7.5h4"/>
<path d="M14 7l1.5 1.5 1.5-1.5" stroke-width="0.7"/>
<rect x="24" y="5.5" width="5" height="5"/><path d="M26 5.5v-1.5h5v5h-2"/>
<path d="M39 6.5l3 3 3-3"/>
<path d="M54 9.5l3-3 3 3"/>
<path d="M69 5.5h7 M69 8h7 M69 10.5h7 M71 4.5v2 M74 7v2"/>
<path d="M112 6h7 M114 6v-1h3v1 M113 7h5v4.5h-5z" fill="#d8d8d8"/>
</svg>

<!-- status -->
<div class="a" style="left:17px;top:426.5px;font-size:6.4px;color:#1a1a1a;-webkit-text-stroke:0.2px #1a1a1a">c) Pencil-2</div>
<div class="a" style="left:177px;top:426.8px;font-size:6.4px;color:#1a1a1a;-webkit-text-stroke:0.15px #1a1a1a">RGB/Alpha (16-bit integer/channel)&nbsp; sRGB-elle-V2-g10.icc</div>
<div class="a" style="left:511px;top:423.5px;width:77px;height:13.7px;background:#5a5a5a;font-size:6.3px;line-height:14px;text-align:center;color:#1a1a1a;-webkit-text-stroke:0.15px #1a1a1a">2,560 x 1,440 (175.1 MiB)</div>
<div class="a" style="left:637.5px;top:423.5px;width:13px;height:13px;border-radius:50%;background:#3e3e3e"></div>
<div class="a" style="left:667px;top:426.8px;font-size:5.8px;color:#ddd">0.00°</div>
<div class="a" style="left:734px;top:426.5px;font-size:6.2px;color:#1a1a1a;-webkit-text-stroke:0.2px #1a1a1a">61%</div>

<div class="a" style="left:640.5px;top:429.5px;width:8px;height:1.2px;background:#eee"></div>
<div class="a" style="left:3px;top:426.5px;width:8px;height:7px;background:#8c8c8c;border-radius:1px"></div>
<svg class="a" style="left:748px;top:426px" width="52" height="10"><path d="M1 3.5l1.5 1.5 1.5-1.5" stroke="#222" stroke-width="0.8" fill="none"/>
<rect x="6" y="3.3" width="33" height="3" rx="1.5" fill="#4e4e4e"/><rect x="6" y="3.3" width="10" height="3" rx="1.5" fill="#5a80c2"/>
<circle cx="16" cy="4.8" r="3.4" fill="#3a3a3a"/></svg>
<div class="a" style="left:789.5px;top:425.5px;width:7px;height:8.5px;background:#cfd8cf;border:1px solid #888"></div>

<!-- watermark -->
<svg class="a" style="left:0;top:0" width="800" height="439" fill="none" stroke-linecap="round">
<defs><linearGradient id="fire" gradientUnits="userSpaceOnUse" x1="0" y1="376" x2="0" y2="416"><stop offset="0" stop-color="#d8b83a"/><stop offset="0.5" stop-color="#d88a30"/><stop offset="1" stop-color="#d04a38"/></linearGradient></defs>
<g stroke="#262a82" opacity="0.95" transform="translate(0,0)">
<path d="M752.5 331C753.5 345 754 358 753.5 369L749 365" stroke-width="3.4"/>
<path d="M737 345.5L749 344.5C746 352 741 360 735.5 366" stroke-width="2.8"/>
<path d="M767 342L756.5 351.5" stroke-width="2.8"/>
<path d="M756 348C760 356 765 363 771 368" stroke-width="3"/>
</g>
<g stroke="url(#fire)" opacity="0.95">
<path d="M740.5 388.5C739 392 738 396 736.8 399.5" stroke-width="2.6"/>
<path d="M750.5 378.5L751 381C752 388 752.5 393 751.5 398C748 405 743 411 737 415.5" stroke-width="2.8"/>
<path d="M766 388.5L759.5 395" stroke-width="2.6"/>
<path d="M754 399.5C758 405 762 410 768.5 414.5" stroke-width="2.8"/>
</g>
</svg>
</body></html>
